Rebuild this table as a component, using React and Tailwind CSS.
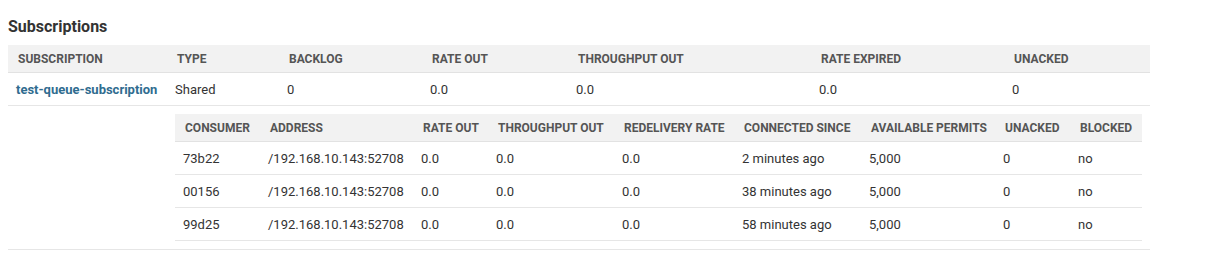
import { Fragment } from 'react'

const subscriptions = [
  {
    name: 'test-queue-subscription',
    type: 'Shared',
    backlog: '0',
    rateOut: '0.0',
    throughputOut: '0.0',
    rateExpired: '0.0',
    unacked: '0',
    consumers: [
      { id: '73b22', address: '/192.168.10.143:52708', rateOut: '0.0', throughputOut: '0.0', redelivery: '0.0', since: '2 minutes ago', permits: '5,000', unacked: '0', blocked: 'no' },
      { id: '00156', address: '/192.168.10.143:52708', rateOut: '0.0', throughputOut: '0.0', redelivery: '0.0', since: '38 minutes ago', permits: '5,000', unacked: '0', blocked: 'no' },
      { id: '99d25', address: '/192.168.10.143:52708', rateOut: '0.0', throughputOut: '0.0', redelivery: '0.0', since: '58 minutes ago', permits: '5,000', unacked: '0', blocked: 'no' },
    ],
  },
]

const outerCols = [
  { label: 'SUBSCRIPTION', w: 'w-[159px]' },
  { label: 'TYPE', w: 'w-[112px]' },
  { label: 'BACKLOG', w: 'w-[143px]' },
  { label: 'RATE OUT', w: 'w-[146px]' },
  { label: 'THROUGHPUT OUT', w: 'w-[243px]' },
  { label: 'RATE EXPIRED', w: 'w-[193px]' },
  { label: 'UNACKED', w: 'w-[146px]' },
]

const innerCols = [
  { label: 'CONSUMER', w: 'w-[85px]' },
  { label: 'ADDRESS', w: 'w-[153px]' },
  { label: 'RATE OUT', w: 'w-[75px]' },
  { label: 'THROUGHPUT OUT', w: 'w-[126px]' },
  { label: 'REDELIVERY RATE', w: 'w-[120px]' },
  { label: 'CONNECTED SINCE', w: 'w-[127px]' },
  { label: 'AVAILABLE PERMITS', w: 'w-[134px]' },
  { label: 'UNACKED', w: 'w-[75px]' },
  { label: 'BLOCKED', w: 'w-[72px]' },
]

// celdas comunes
const Th = ({ children }) => (
  <th className="h-[28px] border-b border-[#e2e2e2] bg-[#f2f2f2] pl-[10px] pr-2 pt-px text-left align-middle text-[12px] font-bold text-[#555] whitespace-nowrap">
    {children}
  </th>
)

const Td = ({ children, link = false }) => (
  <td
    className={`h-[33px] border-b border-[#e6e6e6] px-2 pt-px align-middle text-[13px] whitespace-nowrap ${
      link ? 'font-bold text-[#2f6c8f]' : 'text-[#333]'
    }`}
  >
    {children}
  </td>
)

const ConsumersTable = ({ consumers }) => (
  <table className="w-[967px] table-fixed border-separate border-spacing-0">
    <colgroup>
      {innerCols.map((c) => (
        <col key={c.label} className={c.w} />
      ))}
    </colgroup>
    <thead>
      <tr>
        {innerCols.map((c) => (
          <Th key={c.label}>{c.label}</Th>
        ))}
      </tr>
    </thead>
    <tbody>
      {consumers.map((c) => (
        <tr key={c.id}>
          <Td>{c.id}</Td>
          <Td>{c.address}</Td>
          <Td>{c.rateOut}</Td>
          <Td>{c.throughputOut}</Td>
          <Td>{c.redelivery}</Td>
          <Td>{c.since}</Td>
          <Td>{c.permits}</Td>
          <Td>{c.unacked}</Td>
          <Td>{c.blocked}</Td>
        </tr>
      ))}
    </tbody>
  </table>
)

function App() {
  return (
    <div className="min-h-[274px] bg-white px-2 pt-[17px] font-['Roboto','Liberation_Sans',sans-serif]">
      <h3 className="h-5 text-[16px] leading-5 font-bold text-[#333]">Subscriptions</h3>
      <table className="mt-2 w-[1142px] table-fixed border-separate border-spacing-0">
        <colgroup>
          {outerCols.map((c) => (
            <col key={c.label} className={c.w} />
          ))}
        </colgroup>
        <thead>
          <tr>
            {outerCols.map((c) => (
              <Th key={c.label}>{c.label}</Th>
            ))}
          </tr>
        </thead>
        <tbody>
          {subscriptions.map((s) => (
            <Fragment key={s.name}>
              <tr>
                <Td link>{s.name}</Td>
                <Td>{s.type}</Td>
                <Td>{s.backlog}</Td>
                <Td>{s.rateOut}</Td>
                <Td>{s.throughputOut}</Td>
                <Td>{s.rateExpired}</Td>
                <Td>{s.unacked}</Td>
              </tr>
              <tr>
                <td className="border-b border-[#e6e6e6]" />
                <td colSpan={6} className="border-b border-[#e6e6e6] px-2 py-2">
                  <ConsumersTable consumers={s.consumers} />
                </td>
              </tr>
            </Fragment>
          ))}
        </tbody>
      </table>
    </div>
  )
}

export default App
